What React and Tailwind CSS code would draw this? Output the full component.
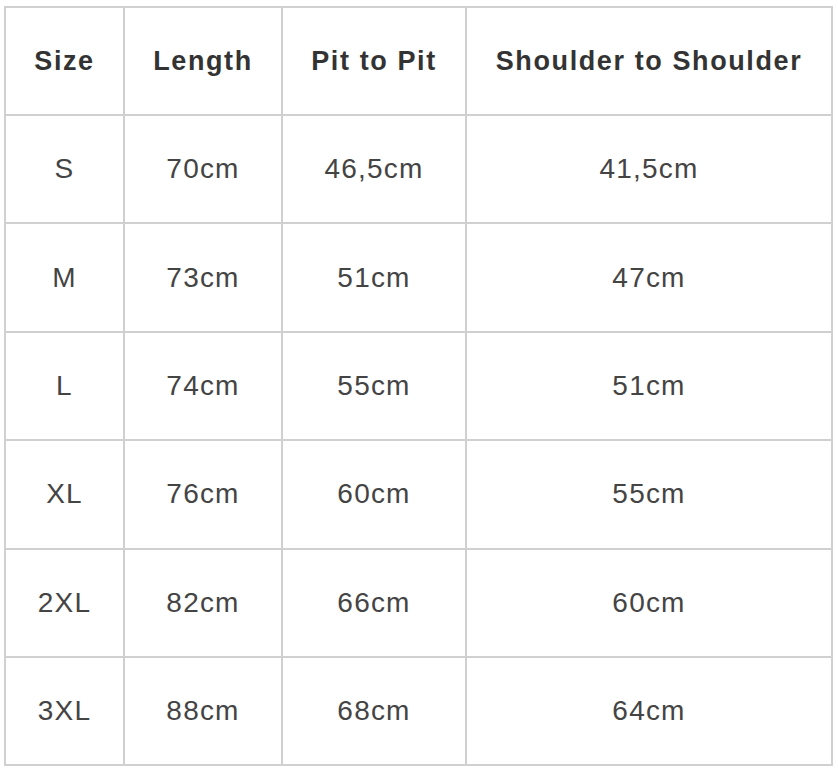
import React from "react";

const rows = [
  ["S", "70cm", "46,5cm", "41,5cm"],
  ["M", "73cm", "51cm", "47cm"],
  ["L", "74cm", "55cm", "51cm"],
  ["XL", "76cm", "60cm", "55cm"],
  ["2XL", "82cm", "66cm", "60cm"],
  ["3XL", "88cm", "68cm", "64cm"],
];

const headers = ["Size", "Length", "Pit to Pit", "Shoulder to Shoulder"];
const widths = ["w-[119px]", "w-[158px]", "w-[184px]", "w-[366px]"];

function App() {
  return (
    <div className="bg-white w-[838px] h-[772px] pt-[6px] pl-[4px]" style={{ fontFamily: '"Liberation Sans", Arial, sans-serif' }}>
      <table className="border-collapse table-fixed w-[829px]">
        <thead>
          <tr className="h-[108px]">
            {headers.map((h, i) => (
              <th key={i} className={`${widths[i]} border-2 border-[#d0d0d0] text-center font-bold text-[27px] tracking-[1.6px] text-[#333333]`}>
                {h}
              </th>
            ))}
          </tr>
        </thead>
        <tbody>
          {rows.map((row, r) => (
            <tr key={r} className="h-[108.4px]">
              {row.map((cell, i) => (
                <td key={i} className="border-2 border-[#d0d0d0] text-center text-[28px] tracking-[1.2px] text-[#444444]">
                  {cell}
                </td>
              ))}
            </tr>
          ))}
        </tbody>
      </table>
    </div>
  );
}

export default App;
